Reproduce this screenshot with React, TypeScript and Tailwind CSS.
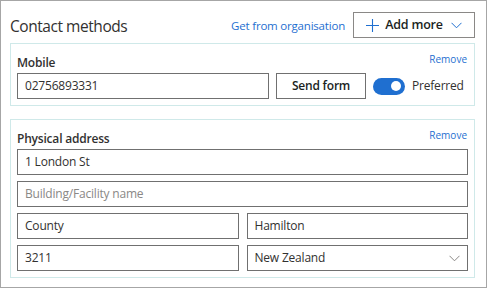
import { useState } from 'react';

function TextBox({ value, placeholder }: { value?: string; placeholder?: string }) {
  return (
    <div className="h-[26px] w-full border border-[#707070] px-[7px] flex items-center text-[12px] tracking-[-0.2px] leading-none">
      {value ? (
        <span className="text-[#323130]">{value}</span>
      ) : (
        <span className="text-[#8a8886]">{placeholder}</span>
      )}
    </div>
  );
}

function CardHeader({ label }: { label: string }) {
  return (
    <div className="flex items-end justify-between h-[18px] mb-[1px]">
      <span className="text-[12px] tracking-[-0.2px] font-semibold text-[#323130] leading-[18px]">{label}</span>
      <a className="text-[10px] text-[#1f6fd0] leading-[14px] mb-[6px] mr-[1px]">Remove</a>
    </div>
  );
}

function App() {
  const [preferred, setPreferred] = useState(true);
  return (
    <div
      className="w-[487px] h-[288px] border border-[#a6a6a6] bg-white pl-[9px] pr-[11px] pt-[11px]"
      style={{ fontFamily: '"Segoe UI", "Open Sans", sans-serif' }}
    >
      <div className="flex items-center h-[26px]">
        <h2 className="mt-[3px] text-[15.5px] tracking-[-0.45px] text-[#323130] font-normal leading-none flex-1">
          Contact methods
        </h2>
        <a className="mt-[1px] text-[11.5px] tracking-[-0.2px] text-[#1f6fd0] mr-[8px]">Get from organisation</a>
        <button className="w-[122px] h-[26px] border border-[#8a8886] flex items-center justify-center gap-[6px]">
          <svg width="13" height="13" viewBox="0 0 13 13" className="text-[#1f6fd0]">
            <path d="M6.5 0v13M0 6.5h13" stroke="currentColor" strokeWidth="1.1" fill="none" />
          </svg>
          <span className="text-[12.5px] tracking-[-0.2px] font-semibold text-[#201f1e]">Add more</span>
          <svg width="11" height="7" viewBox="0 0 11 7" className="ml-[2px] text-[#1f6fd0]">
            <path d="M0.5 0.8l5 5 5-5" stroke="currentColor" strokeWidth="1" fill="none" />
          </svg>
        </button>
      </div>

      <div className="mt-[5px] border border-[#cfe9e9] px-[6px] pt-[10px] pb-[6px]">
        <CardHeader label="Mobile" />
        <div className="flex items-center">
          <div className="w-[252px]">
            <TextBox value="02756893331" />
          </div>
          <button className="ml-[7px] w-[90px] h-[26px] border border-[#707070] text-[12px] tracking-[-0.2px] font-semibold text-[#201f1e]">
            Send form
          </button>
          <button
            onClick={() => setPreferred(!preferred)}
            className={`ml-[7px] w-[32px] h-[17px] rounded-full flex items-center px-[4px] ${
              preferred ? 'bg-[#1f6fd0] justify-end' : 'bg-white border border-[#605e5c] justify-start'
            }`}
          >
            <span className="block w-[10px] h-[10px] rounded-full bg-white" />
          </button>
          <span className="ml-[7px] text-[12px] tracking-[-0.2px] text-[#323130]">Preferred</span>
        </div>
      </div>

      <div className="mt-[13px] border border-[#cfe9e9] px-[6px] pt-[10px] pb-[6px]">
        <CardHeader label="Physical address" />
        <div className="flex flex-col gap-[6px]">
          <TextBox value="1 London St" />
          <TextBox placeholder="Building/Facility name" />
          <div className="grid grid-cols-2 gap-[8px]">
            <TextBox value="County" />
            <TextBox value="Hamilton" />
          </div>
          <div className="grid grid-cols-2 gap-[8px]">
            <TextBox value="3211" />
            <div className="h-[26px] border border-[#707070] pl-[7px] pr-[7px] flex items-center justify-between text-[12px] tracking-[-0.2px]">
              <span className="text-[#323130]">New Zealand</span>
              <svg width="11" height="7" viewBox="0 0 11 7" className="text-[#8a8886]">
                <path d="M0.5 0.8l5 5 5-5" stroke="currentColor" strokeWidth="1" fill="none" />
              </svg>
            </div>
          </div>
        </div>
      </div>
    </div>
  );
}

export default App;
